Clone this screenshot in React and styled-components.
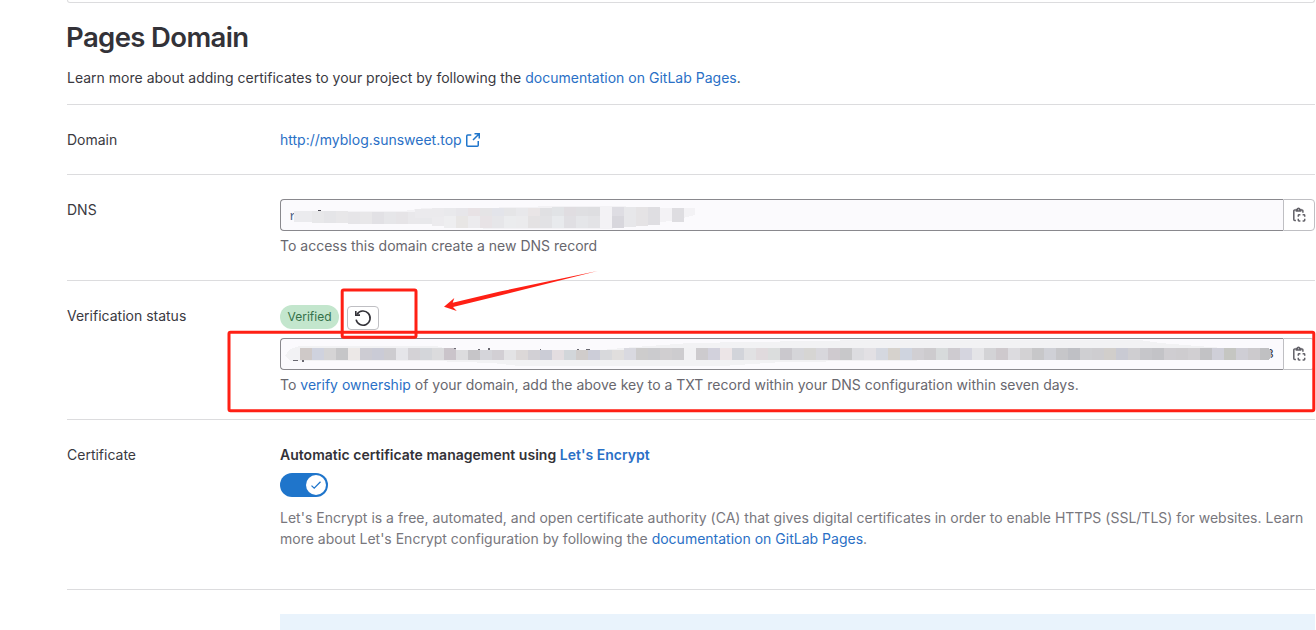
import React from "react";
import styled, { createGlobalStyle } from "styled-components";

const GlobalStyle = createGlobalStyle`
  *, *::before, *::after { box-sizing: border-box; }
  body {
    margin: 0;
    overflow: hidden;
    background: #fff;
    color: #3a393f;
    font-family: Inter, "Noto Sans", sans-serif;
    font-size: 14px;
    line-height: 20px;
  }
`;

const Page = styled.main`
  position: relative;
  width: 1316px;
  height: 630px;
  overflow: hidden;
  padding: 0 1px 0 67px;
`;

const CardEnd = styled.div`
  height: 3px;
  border: 1px solid #dcdcde;
  border-top: 0;
  border-radius: 0 0 4px 4px;
`;

const Title = styled.h1`
  margin: 16px 0 0 -1px;
  color: #333238;
  font-size: 27.5px;
  line-height: 36px;
  font-weight: 600;
  letter-spacing: -0.62px;
`;

const Intro = styled.p`
  margin: 13px 0 16px;
  letter-spacing: 0.008px;
`;

const Link = styled.a`
  color: #2a70c6;
  text-decoration: none;
`;

const SiteLink = styled(Link)`
  display: inline-flex;
  align-items: center;
  gap: 3px;
`;

const Row = styled.section`
  display: grid;
  grid-template-columns: 213px 1fr;
  border-top: 1px solid #dcdcde;
  padding-bottom: ${(p) => p.$bottom}px;
`;

const Label = styled.div`
  padding-top: 25px;
`;

const Field = styled.div`
  min-width: 0;
  padding-top: ${(p) => p.$top || 24}px;
`;

const InputGroup = styled.div`
  display: flex;
  height: 32px;
`;

const InputBox = styled.div`
  position: relative;
  flex: 1;
  border: 1px solid #89888d;
  border-right: 0;
  border-radius: 4px 0 0 4px;
  background: #fbfafd;
`;

const CopyButton = styled.button`
  display: flex;
  align-items: center;
  justify-content: center;
  width: 32px;
  padding: 0;
  border: 1px solid #bfbfc3;
  border-radius: 0 4px 4px 0;
  background: #fff;
  color: #626168;
`;

const Redaction = styled.svg`
  position: absolute;
  top: -1px;
  left: -1px;
`;

const Help = styled.p`
  margin: ${(p) => p.$gap}px 0 0;
  color: #68676e;
`;

const StatusLine = styled.div`
  display: flex;
  gap: 8px;
  height: 33px;
`;

const Badge = styled.span`
  width: 59px;
  height: 24px;
  border-radius: 12px;
  background: #c3e6cd;
  color: #35724a;
  font-size: 12px;
  line-height: 24px;
  text-align: center;
`;

const RetryButton = styled.button`
  display: flex;
  align-items: center;
  justify-content: center;
  width: 32px;
  height: 24px;
  margin-top: 1px;
  padding: 0;
  border: 1px solid #bfbfc3;
  border-radius: 4px;
  background: #fff;
  color: #333238;
`;

const Strong = styled.div`
  color: #333238;
  font-weight: 600;
  letter-spacing: 0.02px;
`;

const Toggle = styled.button`
  display: flex;
  justify-content: flex-end;
  width: 48px;
  height: 24px;
  margin: 8px 0 0;
  padding: 2px;
  border: 0;
  border-radius: 12px;
  background: #1f75cb;
`;

const Knob = styled.span`
  display: flex;
  align-items: center;
  justify-content: center;
  width: 20px;
  height: 20px;
  border-radius: 50%;
  background: #fff;
  color: #1f75cb;
`;

const Description = styled.p`
  margin: 10px 0 0;
  color: #78777d;
  line-height: 21px;
  letter-spacing: 0.005px;
`;

const Alert = styled.div`
  height: 60px;
  background: #e9f3fc;
`;

const Annotations = styled.svg`
  position: absolute;
  top: 0;
  left: 0;
  pointer-events: none;
`;

const ExternalIcon = () => (
  <svg width="16" height="16" viewBox="0 0 16 16" fill="none" stroke="#1f75cb" strokeWidth="1.5">
    <path d="M6.3 3H2.75a1 1 0 0 0-1 1v9.25a1 1 0 0 0 1 1h9.5a1 1 0 0 0 1-1V9" />
    <path d="M9.5 1.75h4.75V6.5M14 2 8 8" />
  </svg>
);

const CopyIcon = () => (
  <svg width="16" height="16" viewBox="0 0 16 16" fill="none" stroke="currentColor" strokeWidth="1.5">
    <path d="M4.8 2.9H3.7a.9.9 0 0 0-.9.9v8.7a.9.9 0 0 0 .9.9h1.2M9.9 2.9H11a.9.9 0 0 1 .9.9v1.9" />
    <path d="M5.4 4V2.4h1a1.1 1.1 0 0 1 2.2 0h1V4Z" />
    <path d="M9.4 7.7H8a.7.7 0 0 0-.7.7v1.3M11.6 7.7H13a.7.7 0 0 1 .7.7v1.3M7.3 11.8v1.5a.7.7 0 0 0 .7.7h1.4M13.7 11.8v1.5a.7.7 0 0 1-.7.7h-1.4" />
  </svg>
);

const RetryIcon = () => (
  <svg width="18" height="18" viewBox="0 0 18 18" fill="none" stroke="currentColor" strokeWidth="1.6">
    <path d="M2.1 10.6A7.1 7.1 0 1 0 3.1 5.2" />
    <path d="M1.8 1.9v4.2h4.2" />
  </svg>
);

const CheckIcon = () => (
  <svg width="12" height="12" viewBox="0 0 12 12" fill="none" stroke="currentColor" strokeWidth="1.3">
    <path d="m1.5 6.6 2.7 2.6 6.3-6.4" />
  </svg>
);

const dnsLower = ["#e8e8ea", "#e5e5e8", "#e8e7e9", "#e6e5e8", "#e8e7e9", "#e2e1e5", "#e6e6e9", "#e6e4e7", "#e9e8eb", "#e8e8eb"];
const dnsTop = ["#e9e9ec", "#e7e6ea", "#e8e2e5", "#e5e4e6", "#e3e4ea", "#e5e5e7", "#e8e8eb", "#e9e5e6", "#e0e0e3", "#e1e3e6", "#e0dde1", "#dfdfe2", "#dedee1"];
const dnsBottom = ["#eeeef0", "#e8e6e5", "#ecebee", "#e8e3e6", "#e6e6e9", "#ebecee", "#ebebed", "#e4e2e3", "#e2e2e5", "#e8eaed", "#e0dfe3", "#e5e6e9", "#e3e3e6"];

const keyBlocks = (
  "cfc9c8 cfd2de d5d4d5 c6c6c8 ece8e7 cdccd3 cacbd6 cdccd0 e5e5e9 d4d2d6 d4d6da dbdbdd cac4ca dcdcde c6c5c8 d5d5da d2cfd4 e3e3e5 dcd8d8 d2d0d5 " +
  "cbccd6 e3dde0 d2d6da d0cccb cccdd8 d8d9dc e0dedd d9d9e0 cdcccc cbcbce d0ced0 cdcccf f1f1f3 cdcbce d2d1dc ece5e7 d2d4da e1e1e3 e0dadd dbdddd " +
  "cac8cd d5d5d9 d6d5d3 d8d7dc cfcacf c8c8ca dcdce0 e2e0e4 d5d8e0 d6d2cd cfd4df d1cfd3 cdcbce d7dadb cecbd0 d5d5df e4e4e7 d3d3d6 cec9cd dcdbdf " +
  "d3d2d4 c7c7c9 cfd0d6 c6c6c9 bfc0c5 cfcfd2 cecdd0 d1cecb c9cad3 cfced1 c6c6ca c3c3c7 cfcdd1 cecccf d1cfd2 c2c2c5 cfcfd8 c5c6c2 cfced5 cccacd"
).split(" ");

const DnsRedaction = () => (
  <Redaction width="1004" height="34" viewBox="280 199 1004 34" shapeRendering="crispEdges">
    <text x="289" y="220" fontFamily="Liberation Mono, monospace" fontSize="13" fill="#4c5f86">r</text>
    <path d="M309 211h2v1h-2zM318 210h3v1h-3zM411 210h2v2h-2z" fill="#4c4b54" />
    <path d="M294 211h110l20-3h56l77-2h54l60 2h24v7l-24 6-40 4-18 1v3H483v-3l-60-2-12-2H312l-18-2z" fill="#f3f2f5" />
    <rect x="294" y="211" width="18" height="11" fill="#ebebee" />
    {dnsLower.map((c, i) => (
      <rect key={i} x={312 + i * 12} y={i < 3 ? 211 : 212} width="12" height="12" fill={c} />
    ))}
    <path d="M415 209h29v9h-29zM432 208h12v9h-12z" fill="#ebeaed" />
    <path d="M432 217h24v9h-24z" fill="#ecebee" />
    {dnsTop.map((c, i) => (
      <rect key={i} x={444 + i * 12} y={i < 9 ? 208 : 207} width="12" height={i < 9 ? 8 : 9} fill={c} />
    ))}
    {dnsBottom.map((c, i) => (
      <rect key={i} x={444 + i * 12} y="216" width="12" height="12" fill={c} />
    ))}
    <path d="M612 207h12v9h-12z" fill="#dedde3" />
    <path d="M612 216h12v12h-12z" fill="#d8d7dd" />
    <path d="M624 207h12v20h-12z" fill="#e7e7ea" />
    <path d="M636 207h12v19h-12z" fill="#e5e3e5" />
    <path d="M648 207h12v18h-12z" fill="#dfdee2" />
    <path d="M672 208h12v14h-12z" fill="#dedde1" />
  </Redaction>
);

const KeyRedaction = () => (
  <Redaction width="1004" height="32" viewBox="280 338 1004 32" shapeRendering="crispEdges">
    <path d="M285 356l5-7 10-3h136l16 4h150l20-2 68-5 180-3h270l20 3 50 4 14 1v8l-258 4-98 1-85 1-60 4H520l-28-3-60-2H290z" fill="#f2f2f4" />
    {keyBlocks.map((c, i) => {
      const clipped = i > 12 && i < 27;
      return <rect key={i} x={300 + i * 12} y={clipped ? 350 : 348} width="12" height={clipped ? 10 : 12} fill={`#${c}`} />;
    })}
    <path d="M293 360h5v1h-5zM302 360h2v2h-2zM454 348h2v1h-2zM478 349h2v1h-2zM488 348h2v2h-2zM540 349h1v1h-1zM577 349h2v1h-2zM586 349h4v1h-4z" fill="#6a6972" />
    <rect x="1260" y="348" width="12" height="12" fill="#fbfafd" />
    <text x="1266" y="358" fontFamily="Liberation Mono, monospace" fontSize="13" fill="#333238">3</text>
    <path d="M1260 348h8l3 3v6l-3 3h-8z" fill="#c0c0c2" />
  </Redaction>
);

const CopyField = ({ children }) => (
  <InputGroup>
    <InputBox>{children}</InputBox>
    <CopyButton aria-label="Copy"><CopyIcon /></CopyButton>
  </InputGroup>
);

export default function App() {
  return (
    <Page>
      <GlobalStyle />
      <CardEnd />
      <Title>Pages Domain</Title>
      <Intro>
        Learn more about adding certificates to your project by following the{" "}
        <Link>documentation on GitLab Pages</Link>.
      </Intro>

      <Row $bottom={24}>
        <Label>Domain</Label>
        <Field $top={25}>
          <SiteLink>http://myblog.sunsweet.top <ExternalIcon /></SiteLink>
        </Field>
      </Row>

      <Row $bottom={24}>
        <Label>DNS</Label>
        <Field>
          <CopyField><DnsRedaction /></CopyField>
          <Help $gap={5}>To access this domain create a new DNS record</Help>
        </Field>
      </Row>

      <Row $bottom={24}>
        <Label>Verification status</Label>
        <Field>
          <StatusLine>
            <Badge>Verified</Badge>
            <RetryButton aria-label="Retry verification"><RetryIcon /></RetryButton>
          </StatusLine>
          <CopyField><KeyRedaction /></CopyField>
          <Help $gap={5}>
            To <Link>verify ownership</Link> of your domain, add the above key to a TXT record within your DNS
            configuration within seven days.
          </Help>
        </Field>
      </Row>

      <Row $bottom={40}>
        <Label>Certificate</Label>
        <Field $top={25}>
          <Strong>Automatic certificate management using <Link>Let's Encrypt</Link></Strong>
          <Toggle aria-label="Automatic certificate management"><Knob><CheckIcon /></Knob></Toggle>
          <Description>
            Let's Encrypt is a free, automated, and open certificate authority (CA) that gives digital certificates in
            order to enable HTTPS (SSL/TLS) for websites. Learn<br />more about Let's Encrypt configuration by following
            the <Link>documentation on GitLab Pages</Link>.
          </Description>
        </Field>
      </Row>

      <Row $bottom={0}>
        <Label />
        <Field><Alert /></Field>
      </Row>

      <Annotations width="1316" height="630" viewBox="0 0 1316 630">
        <g fill="none" stroke="#ff2015" strokeWidth="3">
          <rect x="342.2" y="290" width="73.8" height="47.3" rx="1.5" />
          <rect x="229" y="332.3" width="1084.8" height="78.4" rx="1.5" />
        </g>
        <path d="M444 306.8 454.3 298l-1.6 4.8L500 291.5 597.5 271 500 295.5 453 307l3.8 3.9Z" fill="#ff2015" />
      </Annotations>
    </Page>
  );
}
